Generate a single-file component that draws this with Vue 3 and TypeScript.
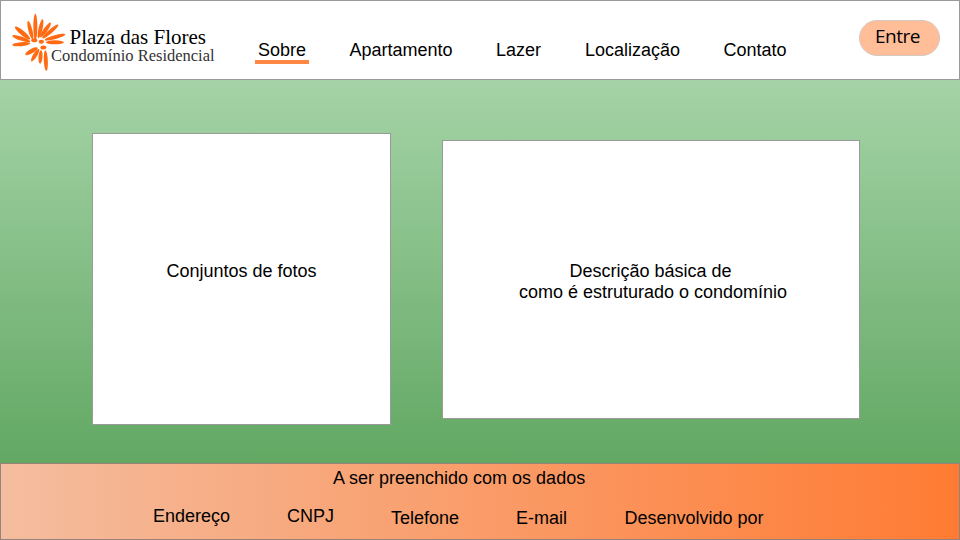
<script setup lang="ts">
interface Petal { x1: number; y1: number; x2: number; y2: number; w: number }

const petals: Petal[] = [
  { x1: 106, y1: 41, x2: 106, y2: 120, w: 12 },
  { x1: 84, y1: 63, x2: 98, y2: 118, w: 12 },
  { x1: 45, y1: 80, x2: 90, y2: 118, w: 14 },
  { x1: 37, y1: 107, x2: 91, y2: 125, w: 12 },
  { x1: 37, y1: 135, x2: 91, y2: 130, w: 12 },
  { x1: 128, y1: 58, x2: 115, y2: 115, w: 12 },
  { x1: 152, y1: 68, x2: 121, y2: 112, w: 12 },
  { x1: 175, y1: 74, x2: 127, y2: 115, w: 12 },
  { x1: 196, y1: 103, x2: 134, y2: 120, w: 12 },
  { x1: 192, y1: 127, x2: 137, y2: 127, w: 12 },
  { x1: 76, y1: 164, x2: 113, y2: 143, w: 13 },
  { x1: 94, y1: 184, x2: 117, y2: 147, w: 12 },
  { x1: 120, y1: 191, x2: 123, y2: 151, w: 12 },
  { x1: 139, y1: 213, x2: 136, y2: 151, w: 12 },
  { x1: 94, y1: 121, x2: 112, y2: 121, w: 12 },
  { x1: 116, y1: 125, x2: 132, y2: 125, w: 12 },
  { x1: 121, y1: 143, x2: 139, y2: 142, w: 12 },
]

const shapes = petals.map((p) => {
  const dx = p.x2 - p.x1
  const dy = p.y2 - p.y1
  const cx = (p.x1 + p.x2) / 2
  const cy = (p.y1 + p.y2) / 2
  return {
    cx,
    cy,
    rx: Math.hypot(dx, dy) / 2,
    ry: p.w / 2,
    transform: `rotate(${(Math.atan2(dy, dx) * 180) / Math.PI} ${cx} ${cy})`,
  }
})

const links = ['Sobre', 'Apartamento', 'Lazer', 'Localização', 'Contato']
const contacts = ['Endereço', 'CNPJ', 'Telefone', 'E-mail', 'Desenvolvido por']
</script>

<template>
  <div class="page">
    <header class="header">
      <div class="brand">
        <svg class="flower" viewBox="33 36 165 180" width="55" height="60">
          <ellipse v-for="(s, i) in shapes" :key="i" v-bind="s" fill="#ff6a13" />
        </svg>
        <div class="brand-text">
          <span class="name">Plaza das Flores</span>
          <span class="kind">Condomínio Residencial</span>
        </div>
      </div>
      <nav class="nav">
        <a v-for="(l, i) in links" :key="l" :class="{ active: i === 0 }">{{ l }}</a>
      </nav>
      <button class="enter" type="button">Entre</button>
    </header>
    <main class="main">
      <section class="card photos">Conjuntos de fotos</section>
      <section class="card about">
        <span class="lead">Descrição básica de</span>
        <span>como é estruturado o condomínio</span>
      </section>
    </main>
    <footer class="footer">
      <p class="note">A ser preenchido com os dados</p>
      <div class="contacts">
        <span v-for="c in contacts" :key="c">{{ c }}</span>
      </div>
    </footer>
  </div>
</template>

<style scoped>
.page {
  width: 960px;
  height: 540px;
  display: flex;
  flex-direction: column;
  overflow: hidden;
  font: 18px/21px "Liberation Sans", Arial, sans-serif;
  color: #000;
}
.header {
  height: 80px;
  box-sizing: border-box;
  border: 1px solid #999;
  background: #fff;
  display: flex;
  align-items: flex-start;
}
.brand {
  width: 257px;
  box-sizing: border-box;
  padding: 11px 0 0 10px;
  display: flex;
}
.flower {
  flex: none;
}
.brand-text {
  display: flex;
  flex-direction: column;
  margin: 16px 0 0 -15px;
  font-family: "Liberation Serif", "Times New Roman", serif;
  white-space: nowrap;
}
.name {
  font-size: 21px;
  line-height: 19px;
  padding-left: 18.5px;
}
.kind {
  font-size: 16.5px;
  line-height: 17px;
  color: #333;
}
.nav {
  width: 601px;
  padding-top: 39px;
  display: grid;
  grid-template-columns: 91.4px 146.6px 89px 138.6px auto;
}
.nav a {
  justify-self: start;
}
.nav .active {
  height: 20px;
  border-bottom: 4px solid #ff8744;
  padding: 0 3px;
  margin-left: -3px;
}
.enter {
  width: 81px;
  height: 36px;
  margin-top: 19px;
  padding: 0 4px 5px 0;
  border: 1px solid #d5c8c0;
  border-radius: 18px;
  background: #ffbd98;
  color: #000;
  font: 19px/28px "Open Sans", "Noto Sans", sans-serif;
  letter-spacing: -0.5px;
}
.main {
  height: 383px;
  box-sizing: border-box;
  padding: 53px 0 0 92px;
  display: flex;
  align-items: flex-start;
  gap: 51px;
  background: linear-gradient(#a5d3a7, #62a863);
}
.card {
  box-sizing: border-box;
  border: 1px solid #999;
  background: #fff;
  display: flex;
  flex-direction: column;
  align-items: center;
}
.photos {
  width: 299px;
  height: 292px;
  padding-top: 127px;
}
.about {
  width: 418px;
  height: 279px;
  margin-top: 7px;
  padding: 120px 0 0 4px;
}
.lead {
  margin-right: 5px;
}
.footer {
  height: 77px;
  box-sizing: border-box;
  border: 1px solid #96827a;
  background: linear-gradient(90deg, #f4bd9f, #ff7b33);
  padding-top: 4px;
}
.note {
  margin: 0 0 0 332px;
}
.contacts {
  margin: 17px 0 0 152px;
  display: grid;
  grid-template-columns: 134px 104px 125px 108.5px auto;
}
.contacts span:nth-child(n + 3) {
  padding-top: 2px;
}
</style>

<style>
body {
  margin: 0;
}
</style>
